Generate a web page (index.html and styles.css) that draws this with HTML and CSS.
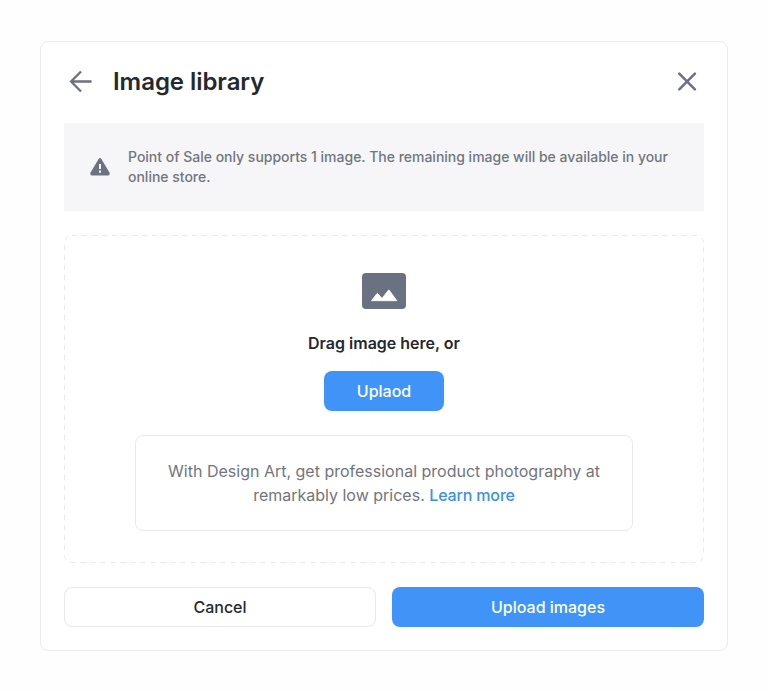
FILE: index.html
```
<!DOCTYPE html>
<html lang="en">
<head>
<meta charset="utf-8">
<title>Image library</title>
<link rel="stylesheet" href="styles.css">
</head>
<body>
<main class="dialog">
  <header class="header">
    <svg class="back" width="24" height="24" viewBox="0 0 24 24"><path d="M23.6 11.5H3.3M13 1.5L3.1 11.5l9.9 10"/></svg>
    <h1 class="title">Image library</h1>
    <svg class="close" width="24" height="24" viewBox="0 0 24 24"><path d="M4.3 3.7l15.6 15.6M19.9 3.7L4.3 19.3"/></svg>
  </header>
  <section class="banner">
    <svg class="warning" width="20" height="18" viewBox="0 0 20 18"><path fill="#6d7280" d="M8.6 1.1Q10-.9 11.4 1.1L19.3 14.3Q20.6 17.5 17.6 17.5H2.4Q-.6 17.5.7 14.3Z"/><path fill="#f6f6f8" d="M9 6.1h2v4.8H9zM9 12.6h2v2.2H9z"/></svg>
    <p class="notice">Point of Sale only supports 1 image. The remaining image will be available in your<br>online store.</p>
  </section>
  <section class="dropzone">
    <svg class="outline" width="640" height="328"><rect x=".5" y=".5" width="639" height="327" rx="7.5"/></svg>
    <svg class="picture" width="44" height="36" viewBox="0 0 44 36"><rect width="44" height="36" rx="4" fill="#6a7180"/><path d="M9.5 27.7l5.4-7q.5-.5 1 0l4.1 4.7 6.2-8q.6-.7 1.2 0l7.4 10.3z" fill="#fff" stroke="#fff" stroke-width=".8" stroke-linejoin="round"/></svg>
    <p class="prompt">Drag image here, or</p>
    <button class="button primary upload">Uplaod</button>
    <p class="promo">With Design Art, get professional product photography at<br>remarkably low prices. <a class="link" href="#">Learn more</a></p>
  </section>
  <footer class="actions">
    <button class="button secondary">Cancel</button>
    <button class="button primary">Upload images</button>
  </footer>
</main>
</body>
</html>
```
FILE: styles.css
```
* { box-sizing: border-box; }
body { margin: 0; padding: 40.5px 40px; background: #fefefe; color: #25282d; font-family: Inter, sans-serif; }
h1, p { margin: 0; }
svg { display: block; flex: none; }
.dialog { height: 610px; padding: 23px; border: 1px solid #ebebed; border-radius: 8px; background: #fff; display: flex; flex-direction: column; gap: 24px; }
.header { height: 34px; display: flex; align-items: center; padding: 0 5px 0 4px; }
.back, .close { fill: none; stroke: #6d7080; stroke-width: 2.3; }
.close { stroke-width: 2.5; stroke-linecap: round; }
.title { flex: 1; margin-left: 21px; font-size: 24px; line-height: 34px; font-weight: 600; letter-spacing: -.05px; }
.banner { height: 88px; padding: 24px 32px 24px 26px; display: flex; align-items: center; gap: 18px; background: #f6f6f8; }
.notice { color: #72757d; font-size: 14px; line-height: 20px; font-weight: 500; letter-spacing: -.01px; }
.dropzone { position: relative; height: 328px; padding-top: 38px; display: flex; flex-direction: column; align-items: center; }
.outline { position: absolute; inset: 0; fill: none; stroke: #e8e9eb; stroke-dasharray: 5 5; }
.prompt { margin-top: 22px; font-size: 16px; line-height: 24px; font-weight: 600; }
.button { height: 40px; border: 0; border-radius: 8px; font: 500 16px/24px Inter, sans-serif; }
.primary { background: #4094f7; color: #fff; }
.secondary { background: #fff; color: #25282d; border: 1px solid #e9e9ec; }
.upload { width: 120px; margin-top: 16px; }
.promo { width: 498px; height: 96px; margin-top: 24px; padding: 23px 24px; border: 1px solid #e9e9ec; border-radius: 8px; color: #72757e; font-size: 16px; line-height: 24px; text-align: center; }
.link { color: #3b8fec; font-weight: 500; letter-spacing: -.15px; text-decoration: none; }
.actions { display: grid; grid-template-columns: 1fr 1fr; gap: 16px; }
```
